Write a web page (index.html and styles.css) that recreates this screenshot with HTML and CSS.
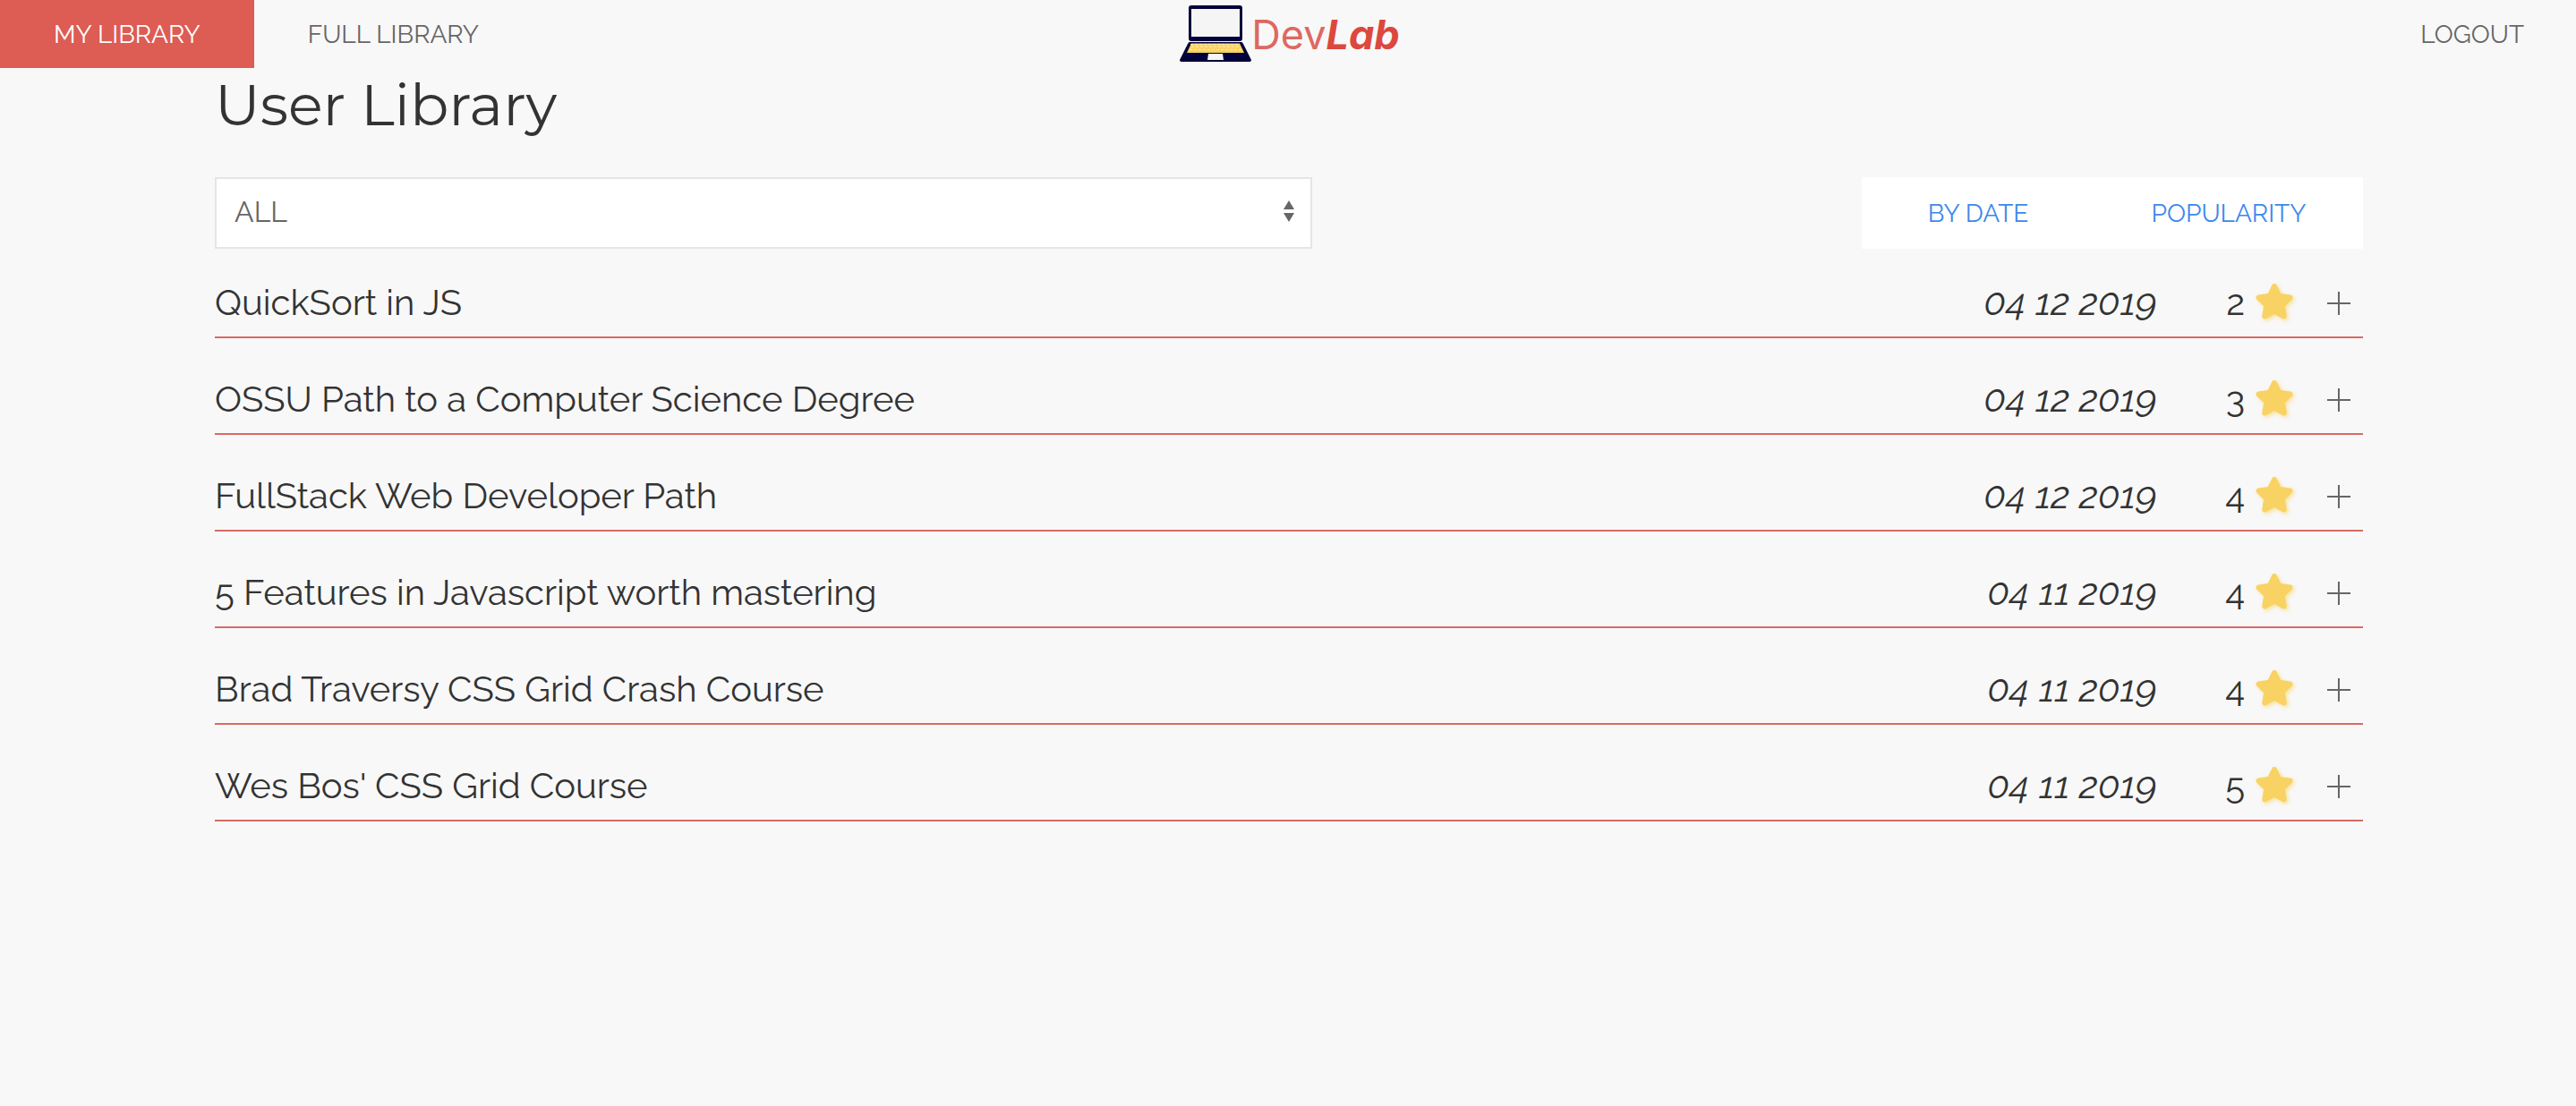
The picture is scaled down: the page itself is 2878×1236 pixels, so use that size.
FILE: index.html
```html
<!DOCTYPE html>
<html lang="en">
<head>
<meta charset="utf-8">
<meta name="viewport" content="width=device-width, initial-scale=1">
<title>DevLab</title>
<link rel="stylesheet" href="styles.css">
</head>
<body>
<svg class="sprite" aria-hidden="true">
  <symbol id="star" viewBox="0 0 46 44">
    <path d="M23 5 L28.300 15.700 L40.500 17.500 L31.700 26.100 L33.800 38.500 L23 32.700 L12.200 38.500 L14.300 26.100 L5.500 17.500 L17.700 15.700 Z" fill="#f8d364" stroke="#f8d364" stroke-width="6" stroke-linejoin="round"/>
  </symbol>
  <symbol id="plus" viewBox="0 0 26 26">
    <path d="M13 0V26M0 13H26" fill="none" stroke="#666" stroke-width="2"/>
  </symbol>
</svg>
<header class="navbar">
  <nav class="nav-left">
    <a class="nav-link active" href="#my">MY LIBRARY</a>
    <a class="nav-link" href="#full">FULL LIBRARY</a>
  </nav>
  <a class="logo" href="#home">
    <svg class="laptop" viewBox="0 0 80 64" aria-hidden="true">
      <rect x="10" width="60" height="40" rx="3" fill="#02023a"/>
      <rect x="13" y="4" width="54" height="31" fill="#f5f5f5"/>
      <path d="M11 41H69Q70 41 71 43L80 61Q80 63 78 63H2Q0 63 0 61L9 43Q10 41 11 41Z" fill="#02023a"/>
      <path d="M13 42.500H67L72 53H8Z" fill="#f8d364"/>
      <path d="M13 46H67M11 49.500H69M12 43.500H66" stroke="#fdebb4" stroke-width="1" stroke-dasharray="3 2" fill="none"/>
      <path d="M32 54H48L49 61H31Z" fill="#f5f5f5"/>
    </svg>
    <span class="brand">Dev<b>Lab</b></span>
  </a>
  <nav class="nav-right">
    <a class="nav-link" href="#logout">LOGOUT</a>
  </nav>
</header>
<main class="container">
  <h1>User Library</h1>
  <div class="toolbar">
    <select class="filter" aria-label="Filter">
      <option>ALL</option>
    </select>
    <div class="sort">
      <button type="button">BY DATE</button>
      <button type="button">POPULARITY</button>
    </div>
  </div>
  <ul class="list">
    <li class="item"><span class="title">QuickSort in JS</span><span class="date">04 12 2019</span><span class="count">2</span><svg class="star" aria-hidden="true"><use href="#star"/></svg><button class="add" type="button" aria-label="Add"><svg><use href="#plus"/></svg></button></li>
    <li class="item"><span class="title">OSSU Path to a Computer Science Degree</span><span class="date">04 12 2019</span><span class="count">3</span><svg class="star" aria-hidden="true"><use href="#star"/></svg><button class="add" type="button" aria-label="Add"><svg><use href="#plus"/></svg></button></li>
    <li class="item"><span class="title">FullStack Web Developer Path</span><span class="date">04 12 2019</span><span class="count">4</span><svg class="star" aria-hidden="true"><use href="#star"/></svg><button class="add" type="button" aria-label="Add"><svg><use href="#plus"/></svg></button></li>
    <li class="item"><span class="title">5 Features in Javascript worth mastering</span><span class="date">04 11 2019</span><span class="count">4</span><svg class="star" aria-hidden="true"><use href="#star"/></svg><button class="add" type="button" aria-label="Add"><svg><use href="#plus"/></svg></button></li>
    <li class="item"><span class="title">Brad Traversy CSS Grid Crash Course</span><span class="date">04 11 2019</span><span class="count">4</span><svg class="star" aria-hidden="true"><use href="#star"/></svg><button class="add" type="button" aria-label="Add"><svg><use href="#plus"/></svg></button></li>
    <li class="item"><span class="title">Wes Bos' CSS Grid Course</span><span class="date">04 11 2019</span><span class="count">5</span><svg class="star" aria-hidden="true"><use href="#star"/></svg><button class="add" type="button" aria-label="Add"><svg><use href="#plus"/></svg></button></li>
  </ul>
</main>
</body>
</html>
```
FILE: styles.css
```css
* { box-sizing: border-box; }

body {
  margin: 0;
  background: #f8f8f8;
  color: #333;
  font-family: Raleway, Lato, sans-serif;
  font-size: 28px;
}

.sprite { display: none; }

.navbar {
  display: grid;
  grid-template-columns: 1fr auto 1fr;
  align-items: center;
  height: 76px;
}

.nav-left,
.nav-right { display: flex; }

.nav-right { justify-content: flex-end; }

.nav-link {
  padding: 2px 60px 0;
  color: #666;
  line-height: 74px;
  text-decoration: none;
}

.nav-right .nav-link { padding: 2px 58px 0; }

.nav-link.active {
  background: #dd5c53;
  color: #fff;
}

.logo {
  display: flex;
  align-items: center;
  padding-left: 4px;
  color: #dd6861;
  font-family: Inter, "Liberation Sans", sans-serif;
  font-size: 45px;
  text-decoration: none;
}

.laptop {
  width: 80px;
  height: 64px;
}

.brand {
  padding-top: 2px;
  line-height: 74px;
}

.brand b {
  color: #dc483e;
  font-style: italic;
}

.container {
  padding: 0 238px 0 240px;
}

h1 {
  margin: 0 0 40px;
  font-family: Montserrat, Inter, sans-serif;
  font-size: 64px;
  font-weight: 400;
  line-height: 82px;
}

.toolbar {
  display: flex;
  align-items: center;
  justify-content: space-between;
}

.filter {
  width: 100%;
  max-width: 1226px;
  height: 80px;
  padding: 0 20px 3px;
  border: 2px solid #e5e5e5;
  border-radius: 0;
  appearance: none;
  background: #fff url("data:image/svg+xml,%3Csvg xmlns='http://www.w3.org/2000/svg' width='48' height='32' viewBox='0 0 48 32'%3E%3Cpath fill='%23666' d='M24 2L30 12H18zM18 16H30L24 26z'/%3E%3C/svg%3E") no-repeat 100% 50%;
  color: #666;
  font: 32px Raleway, Lato, sans-serif;
}

.sort {
  display: grid;
  grid-template-columns: 260px 300px;
}

.sort button {
  height: 80px;
  padding: 0;
  border: 0;
  background: #fff;
  color: #3c88ec;
  font: 28px Raleway, Lato, sans-serif;
}

.list {
  display: grid;
  gap: 30px;
  margin: 22px 0 0;
  padding: 0;
  list-style: none;
}

.item {
  display: flex;
  align-items: center;
  height: 78px;
  padding-bottom: 2px;
  border-bottom: 2px solid #d96a63;
  font-size: 40px;
}

.title { flex: 1; }

.date {
  font-size: 42px;
  font-style: italic;
}

.count {
  width: 98px;
  text-align: right;
}

.star {
  width: 46px;
  height: 44px;
  margin: 0 36px 0 10px;
  filter: drop-shadow(2px 2px 2px rgba(248, 211, 100, 0.6));
}

.add {
  width: 40px;
  height: 40px;
  padding: 4px 14px 0 0;
  border: 0;
  background: none;
}

.add svg {
  display: block;
  width: 26px;
  height: 26px;
}
```
